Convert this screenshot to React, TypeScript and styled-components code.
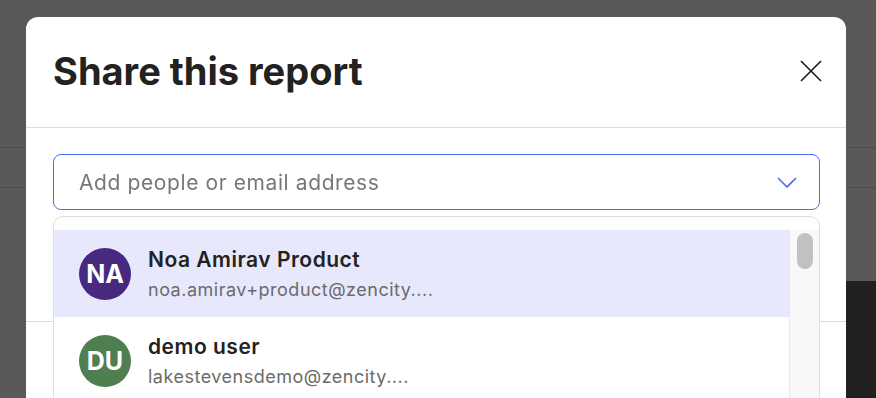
import styled, { createGlobalStyle } from 'styled-components';

const GlobalStyle = createGlobalStyle`
  html, body {
    margin: 0;
    padding: 0;
    height: 100%;
    overflow: hidden;
    font-family: Inter, "Noto Sans", "Liberation Sans", sans-serif;
  }
  * {
    box-sizing: border-box;
  }
`;

const Page = styled.div`
  height: 100vh;
  display: flex;
  flex-direction: column;
  background: #595959;
`;

const PageHeader = styled.div`
  height: 148px;
  border-bottom: 1px solid #4e4e4e;
`;

const PageToolbar = styled.div`
  height: 40px;
  border-bottom: 1px solid #4e4e4e;
`;

const PageContent = styled.div`
  flex: 1;
  display: flex;
  justify-content: flex-end;
  padding-top: 93px;
`;

const DarkPanel = styled.div`
  width: 300px;
  background: #202020;
`;

const Modal = styled.div`
  position: fixed;
  top: 17px;
  left: 26px;
  width: 820px;
  height: 520px;
  background: #fff;
  border-radius: 12px;
  display: flex;
  flex-direction: column;
`;

const ModalHeader = styled.div`
  height: 111px;
  display: flex;
  align-items: center;
  justify-content: space-between;
  padding: 0 24px 2px 27px;
  border-bottom: 1px solid #dcdcdc;
`;

const Title = styled.h2`
  margin: 0;
  font-size: 38px;
  line-height: 44px;
  font-weight: 700;
  color: #222;
`;

const CloseButton = styled.button`
  width: 22px;
  height: 22px;
  padding: 0;
  border: none;
  background: none;
  cursor: pointer;
  display: flex;
`;

const ModalBody = styled.div`
  position: relative;
  padding: 26px 26px 0 27px;
`;

const Select = styled.div`
  height: 56px;
  border: 1px solid #4b6ce8;
  border-radius: 8px;
  display: flex;
  align-items: center;
  justify-content: space-between;
  padding: 0 22px 0 25px;
`;

const Placeholder = styled.span`
  font-size: 21px;
  letter-spacing: 0.6px;
  color: #787878;
`;

const Section = styled.div`
  height: 112px;
  border-bottom: 1px solid #dcdcdc;
  margin: 0 -26px 0 -27px;
`;

const Menu = styled.div`
  position: absolute;
  top: 88px;
  left: 27px;
  right: 26px;
  padding-top: 13px;
  background: #fff;
  border: 1px solid #dedede;
  border-radius: 10px;
  overflow: hidden;
  display: flex;
  flex-direction: column;
`;

const MenuScroll = styled.div`
  display: flex;
  height: 260px;
`;

const OptionList = styled.div`
  flex: 1;
  display: flex;
  flex-direction: column;
`;

const Option = styled.div<{ active?: boolean }>`
  height: 87px;
  flex-shrink: 0;
  display: flex;
  align-items: center;
  gap: 17px;
  padding-left: 25px;
  background: ${p => (p.active ? '#e8e8fc' : '#fff')};
`;

const Avatar = styled.div<{ color: string }>`
  width: 52px;
  height: 52px;
  border-radius: 50%;
  background: ${p => p.color};
  color: #fff;
  font-size: 25px;
  font-weight: 700;
  display: flex;
  align-items: center;
  justify-content: center;
`;

const OptionText = styled.div`
  display: flex;
  flex-direction: column;
  gap: 7px;
`;

const Name = styled.div`
  font-size: 21px;
  line-height: 25px;
  font-weight: 600;
  letter-spacing: 0.5px;
  color: #222;
`;

const Email = styled.div`
  font-size: 18px;
  line-height: 22px;
  letter-spacing: 0.5px;
  color: #6b6b6b;
`;

const ScrollTrack = styled.div`
  width: 30px;
  background: #f8f8f8;
  border-left: 1px solid #e8e8e8;
  padding: 3px 0 0 7px;
`;

const ScrollThumb = styled.div`
  width: 16px;
  height: 36px;
  border-radius: 8px;
  background: #c1c1c1;
`;

const people = [
  { initials: 'NA', name: 'Noa Amirav Product', email: 'noa.amirav+product@zencity....', color: '#47297f' },
  { initials: 'DU', name: 'demo user', email: 'lakestevensdemo@zencity....', color: '#4f7e50' },
];

export default function App() {
  return (
    <>
      <GlobalStyle />
      <Page>
        <PageHeader />
        <PageToolbar />
        <PageContent>
          <DarkPanel />
        </PageContent>
      </Page>
      <Modal role="dialog">
        <ModalHeader>
          <Title>Share this report</Title>
          <CloseButton aria-label="Close">
            <svg width="22" height="22" viewBox="0 0 22 22">
              <path d="M1 1L21 21M21 1L1 21" stroke="#1a1a1a" strokeWidth="1.6" fill="none" />
            </svg>
          </CloseButton>
        </ModalHeader>
        <ModalBody>
          <Select>
            <Placeholder>Add people or email address</Placeholder>
            <svg width="20" height="11" viewBox="0 0 20 11">
              <path d="M1 1L10 10L19 1" stroke="#4b6ce8" strokeWidth="1.6" fill="none" />
            </svg>
          </Select>
          <Section />
          <Menu>
            <MenuScroll>
              <OptionList>
                {people.map((p, i) => (
                  <Option key={p.email} active={i === 0}>
                    <Avatar color={p.color}>{p.initials}</Avatar>
                    <OptionText>
                      <Name>{p.name}</Name>
                      <Email>{p.email}</Email>
                    </OptionText>
                  </Option>
                ))}
              </OptionList>
              <ScrollTrack>
                <ScrollThumb />
              </ScrollTrack>
            </MenuScroll>
          </Menu>
        </ModalBody>
      </Modal>
    </>
  );
}
